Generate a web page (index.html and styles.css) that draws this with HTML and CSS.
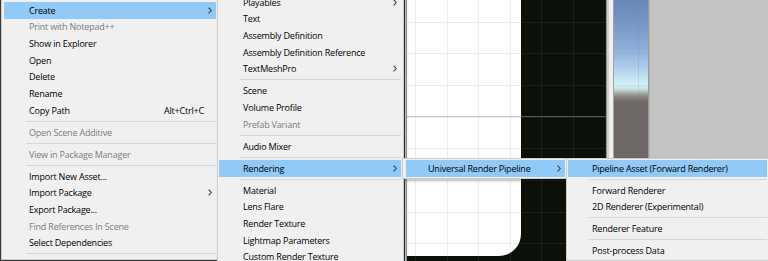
FILE: index.html
```html
<!DOCTYPE html>
<html>
<head>
<meta charset="utf-8">
<link rel="stylesheet" href="styles.css">
</head>
<body>
<div class="editor">
  <div class="left-pane"></div>
  <div class="scene-border"></div>
  <div class="scene">
    <div class="canvas"></div>
  </div>
  <div class="strip"></div>
  <div class="sky"></div>
  <div class="sky-edge"></div>
  <div class="inspector"></div>
</div>

<div class="menu menu-1">
  <div class="item active"><span class="label">Create</span><span class="arrow"><svg width="4" height="7" viewBox="0 0 4 7"><polyline points="0.6,0.6 3.3,3.5 0.6,6.4"/></svg></span></div>
  <div class="item disabled"><span class="label">Print with Notepad++</span></div>
  <div class="item"><span class="label">Show in Explorer</span></div>
  <div class="item"><span class="label">Open</span></div>
  <div class="item"><span class="label">Delete</span></div>
  <div class="item"><span class="label">Rename</span></div>
  <div class="item"><span class="label">Copy Path</span><span class="shortcut">Alt+Ctrl+C</span></div>
  <div class="sep"></div>
  <div class="item disabled"><span class="label">Open Scene Additive</span></div>
  <div class="sep"></div>
  <div class="item disabled"><span class="label">View in Package Manager</span></div>
  <div class="sep"></div>
  <div class="item"><span class="label">Import New Asset...</span></div>
  <div class="item"><span class="label">Import Package</span><span class="arrow"><svg width="4" height="7" viewBox="0 0 4 7"><polyline points="0.6,0.6 3.3,3.5 0.6,6.4"/></svg></span></div>
  <div class="item"><span class="label">Export Package...</span></div>
  <div class="item disabled"><span class="label">Find References In Scene</span></div>
  <div class="item"><span class="label">Select Dependencies</span></div>
  <div class="sep"></div>
</div>

<div class="menu menu-2">
  <div class="item"><span class="label">Playables</span><span class="arrow"><svg width="4" height="7" viewBox="0 0 4 7"><polyline points="0.6,0.6 3.3,3.5 0.6,6.4"/></svg></span></div>
  <div class="item"><span class="label">Text</span></div>
  <div class="item"><span class="label">Assembly Definition</span></div>
  <div class="item"><span class="label">Assembly Definition Reference</span></div>
  <div class="item"><span class="label">TextMeshPro</span><span class="arrow"><svg width="4" height="7" viewBox="0 0 4 7"><polyline points="0.6,0.6 3.3,3.5 0.6,6.4"/></svg></span></div>
  <div class="sep"></div>
  <div class="item"><span class="label">Scene</span></div>
  <div class="item"><span class="label">Volume Profile</span></div>
  <div class="item disabled"><span class="label">Prefab Variant</span></div>
  <div class="sep"></div>
  <div class="item"><span class="label">Audio Mixer</span></div>
  <div class="sep"></div>
  <div class="item active"><span class="label">Rendering</span><span class="arrow"><svg width="4" height="7" viewBox="0 0 4 7"><polyline points="0.6,0.6 3.3,3.5 0.6,6.4"/></svg></span></div>
  <div class="sep"></div>
  <div class="item"><span class="label">Material</span></div>
  <div class="item"><span class="label">Lens Flare</span></div>
  <div class="item"><span class="label">Render Texture</span></div>
  <div class="item"><span class="label">Lightmap Parameters</span></div>
  <div class="item"><span class="label">Custom Render Texture</span></div>
</div>

<div class="menu menu-3">
  <div class="item active"><span class="label">Universal Render Pipeline</span><span class="arrow"><svg width="4" height="7" viewBox="0 0 4 7"><polyline points="0.6,0.6 3.3,3.5 0.6,6.4"/></svg></span></div>
</div>

<div class="menu menu-4">
  <div class="item active"><span class="label">Pipeline Asset (Forward Renderer)</span></div>
  <div class="sep"></div>
  <div class="item"><span class="label">Forward Renderer</span></div>
  <div class="item"><span class="label">2D Renderer (Experimental)</span></div>
  <div class="sep"></div>
  <div class="item"><span class="label">Renderer Feature</span></div>
  <div class="sep"></div>
  <div class="item"><span class="label">Post-process Data</span></div>
</div>
</body>
</html>
```

FILE: styles.css
```css
* { box-sizing: border-box; }

body {
  margin: 0;
  width: 768px;
  height: 261px;
  overflow: hidden;
  position: relative;
  background: #c2c2c2;
  font-family: "Open Sans", "Noto Sans", sans-serif;
  font-size: 9px;
  letter-spacing: -0.2px;
}

.editor {
  display: flex;
  height: 261px;
}

.left-pane {
  width: 405px;
  background: #3a3a3a;
}

.scene-border {
  width: 2px;
  background: linear-gradient(to right, #d4d4d4 0 1px, #9c9c9c 1px 2px);
}

.scene {
  width: 199px;
  background-color: #0b1008;
  background-image:
    linear-gradient(to bottom, transparent 116.5px, #555a52 116.5px, #555a52 117.5px, transparent 117.5px),
    repeating-linear-gradient(to right, transparent 0 8px, #1c2118 8px 9px, transparent 9px 31.6px),
    repeating-linear-gradient(to bottom, transparent 0 21.5px, #1c2118 21.5px 22.5px, transparent 22.5px 31.7px);
}

.canvas {
  width: 114px;
  height: 256px;
  background-color: #ffffff;
  border-bottom-right-radius: 22px;
  background-image:
    linear-gradient(to bottom, transparent 116.5px, #c4c4c4 116.5px, #c4c4c4 117.5px, transparent 117.5px),
    repeating-linear-gradient(to right, transparent 0 8px, #ececec 8px 9px, transparent 9px 31.6px),
    repeating-linear-gradient(to bottom, transparent 0 21.5px, #ececec 21.5px 22.5px, transparent 22.5px 31.7px);
}

.strip {
  width: 8px;
  background: linear-gradient(to right, #8e8e8e 0 1px, #cfcfcf 1px 3px, #efefef 3px 7px, #a4a4a4 7px 8px);
}

.sky {
  width: 34px;
  background-image:
    repeating-linear-gradient(to right, transparent 0 23.5px, rgba(120,120,120,0.18) 23.5px 24.5px, transparent 24.5px 34px),
    repeating-linear-gradient(to bottom, transparent 0 21.5px, rgba(120,120,120,0.12) 21.5px 22.5px, transparent 22.5px 31.7px),
    linear-gradient(to bottom, #6787b7 0px, #7898c6 25px, #8fb0da 50px, #b2d2ec 70px, #d2f2f6 84px, #c8e2e0 89px, #8c8884 96px, #6e6866 102px, #6c6664 261px);
}

.sky-edge {
  width: 2px;
  background: linear-gradient(to right, #9a9a9a 0 1px, #b6b6b6 1px 2px);
}

.inspector {
  flex: 1;
  background: #c3c3c3;
}

/* Menus */
.menu {
  position: absolute;
  display: flex;
  flex-direction: column;
  background: #f0f0f0;
  border: 1px solid #cccccc;
  box-shadow: 2px 2px 3px rgba(0, 0, 0, 0.22);
}

.menu-1 {
  left: 1px;
  top: -1px;
  width: 218px;
  padding: 2px 2px 2px 2px;
}

.menu-2 {
  left: 217px;
  top: -9px;
  width: 187px;
  padding: 2px 2px 2px 1px;
}

.menu-3 {
  left: 402px;
  top: 158px;
  width: 165px;
  padding: 1px 1px 1.33px 3px;
}

.menu-4 {
  left: 566px;
  top: 158px;
  width: 203px;
  padding: 1px;
}

.item {
  height: 16.67px;
  flex: none;
  display: flex;
  align-items: center;
  padding-left: 24px;
  padding-right: 4px;
  white-space: nowrap;
  color: #000000;
}

.menu-1 .item { padding-left: 25px; }
.menu-3 .item { padding-left: 22px; }

.item.active { background: #91c9f7; }
.item.disabled { color: #7d7d7d; }

.label { flex: 1; }

.shortcut { margin-right: 8px; }

.arrow {
  width: 8px;
  display: flex;
  justify-content: flex-end;
}

.arrow svg polyline {
  fill: none;
  stroke: #3c3c3c;
  stroke-width: 1.1;
}

.sep {
  height: 5.33px;
  flex: none;
  display: flex;
  align-items: center;
  padding-left: 21px;
}

.menu-1 .sep { padding-left: 22px; }

.sep::before {
  content: "";
  flex: 1;
  height: 1px;
  background: #d7d7d7;
}
```
